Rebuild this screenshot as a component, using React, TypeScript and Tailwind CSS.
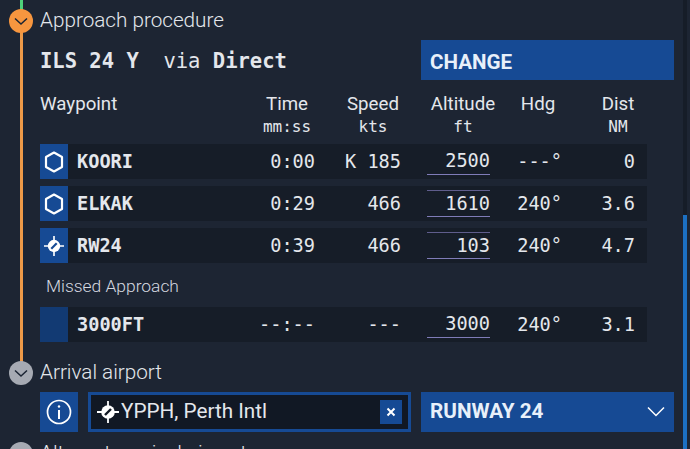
const mono = "font-['DejaVu_Sans_Mono',monospace]"

const Hexagon = () => (
  <svg width="22" height="24" viewBox="0 0 22 24" fill="none" stroke="white" strokeWidth="2.2">
    <path d="M11 2.5 L19 7 L19 17 L11 21.5 L3 17 L3 7 Z" strokeLinejoin="round" />
  </svg>
)

const RunwayIcon = ({ size, slash }: { size: number; slash: string }) => (
  <svg width={size} height={size} viewBox="0 0 22 22">
    <path d="M11 0 V22 M0 11 H22" stroke="white" strokeWidth="1.8" />
    <circle cx="11" cy="11" r="6.8" fill="white" />
    <path d="M8 14 L14 8" stroke={slash} strokeWidth="2.4" />
  </svg>
)

const Chevron = () => (
  <svg width="16" height="9" viewBox="0 0 16 9" fill="none" stroke="#1b2433" strokeWidth="1.5">
    <path d="M2 1.5 L8 7 L14 1.5" />
  </svg>
)

type Row = {
  name: string
  icon?: "hex" | "rwy"
  time: string
  speed: string
  alt: string
  topLine?: boolean
  hdg: string
  dist: string
}

const approach: Row[] = [
  { name: "KOORI", icon: "hex", time: "0:00", speed: "K 185", alt: "2500", hdg: "---°", dist: "0" },
  { name: "ELKAK", icon: "hex", time: "0:29", speed: "466", alt: "1610", topLine: true, hdg: "240°", dist: "3.6" },
  { name: "RW24", icon: "rwy", time: "0:39", speed: "466", alt: "103", topLine: true, hdg: "240°", dist: "4.7" },
]

const missed: Row = { name: "3000FT", time: "--:--", speed: "---", alt: "3000", hdg: "240°", dist: "3.1" }

const WaypointRow = ({ row }: { row: Row }) => (
  <div className={`grid h-[35px] w-[607px] grid-cols-[28px_182px_65px_86px_89px_72px_73px_12px] items-center bg-[#161d28] text-[18.6px] text-[#e4e7ec] ${mono}`}>
    <div className={`flex h-full items-center justify-center ${row.icon ? "bg-[#164a94]" : "bg-[#123a73]"}`}>
      {row.icon === "hex" && <Hexagon />}
      {row.icon === "rwy" && <RunwayIcon size={20} slash="#164a94" />}
    </div>
    <div className="pl-[9px] font-bold">{row.name}</div>
    <div className="text-right">{row.time}</div>
    <div className="text-right">{row.speed}</div>
    <div className="flex justify-end">
      <div className={`flex h-[27px] w-[63px] items-center justify-end border-b border-b-[#7f7cb8] ${row.topLine ? "border-t border-t-[#5f5d8c]" : ""}`}>
        {row.alt}
      </div>
    </div>
    <div className="text-right">{row.hdg}</div>
    <div className="text-right">{row.dist}</div>
    <div />
  </div>
)

const SectionHeader = ({ title, color }: { title: string; color: string }) => (
  <div className="flex h-6 items-center">
    <div className="flex w-[40px] justify-start pl-[9px]">
      <div className={`relative z-10 flex size-6 items-center justify-center rounded-full ${color}`}>
        <Chevron />
      </div>
    </div>
    <div className="-mt-[1px] text-[20.7px] font-light text-[#e4e7ec]">{title}</div>
  </div>
)

export default function App() {
  return (
    <div className="relative h-[449px] w-[690px] overflow-hidden bg-[#1d2533] font-['Roboto',sans-serif]">
      <div className="absolute left-[20px] top-0 h-[10px] w-[3px] bg-[#4fd17a]" />
      <div className="absolute left-[20px] top-[30px] h-[332px] w-[3px] bg-[#ee9a48]" />
      <div className="absolute bottom-0 right-[3px] top-0 w-[4px] bg-[#161d28]" />
      <div className="absolute bottom-0 right-[3px] top-[215px] w-[4px] bg-[#1c70c2]" />

      <div className="flex flex-col pt-[9px]">
        <SectionHeader title="Approach procedure" color="bg-[#f7963f]" />

        <div className="mt-[7px] flex h-10 pl-[40px] text-[#e4e7ec]">
          <div className={`flex w-[381px] items-center whitespace-pre pt-[2px] text-[20.5px] ${mono}`}>
            <span className="font-bold">ILS 24 Y</span>
            <span>{"  via "}</span>
            <span className="font-bold">Direct</span>
          </div>
          <div className="flex w-[253px] items-center bg-[#164a94] pl-[9px] pt-[4px] text-[20.6px] font-bold text-[#e8f0fa]">
            CHANGE
          </div>
        </div>

        <div className="ml-[40px] mt-[13px] grid h-[51px] w-[619px] grid-cols-[215px_64px_108px_72px_78px_82px] text-center text-[18.7px] leading-[22px] text-[#e4e7ec]">
          <div className="text-left">Waypoint</div>
          {[
            ["Time", "mm:ss"],
            ["Speed", "kts"],
            ["Altitude", "ft"],
            ["Hdg", ""],
            ["Dist", "NM"],
          ].map(([label, unit]) => (
            <div key={label}>
              <div>{label}</div>
              <div className={`pt-[1px] text-[16px] ${mono}`}>{unit}</div>
            </div>
          ))}
        </div>

        <div className="ml-[40px] flex flex-col gap-[7px]">
          {approach.map((row) => (
            <WaypointRow key={row.name} row={row} />
          ))}
        </div>

        <div className="ml-[46px] mt-[12px] h-[32px] text-[17.4px] font-light leading-[22px] text-[#d5d9e0]">
          Missed Approach
        </div>

        <div className="ml-[40px]">
          <WaypointRow row={missed} />
        </div>

        <div className="mt-[19px]">
          <SectionHeader title="Arrival airport" color="bg-[#a6aab3]" />
        </div>

        <div className="mt-[7px] flex h-10 pl-[40px]">
          <div className="flex w-[38px] items-center justify-center bg-[#164a94]">
            <svg width="26" height="26" viewBox="0 0 26 26" fill="none" stroke="white">
              <circle cx="13" cy="13" r="11.5" strokeWidth="1.7" />
              <path d="M13 11 V20" strokeWidth="2" />
              <circle cx="13" cy="7.5" r="1.2" fill="white" stroke="none" />
            </svg>
          </div>
          <div className="ml-[10px] flex w-[323px] items-center border-[3px] border-[#164a94] bg-[#111824] pl-[6px] pr-[6px]">
            <RunwayIcon size={22} slash="#111824" />
            <span className="ml-[2px] text-[20.7px] text-[#e4e7ec]">YPPH, Perth Intl</span>
            <div className="ml-auto flex h-6 w-[22px] items-center justify-center bg-[#164a94]">
              <svg width="10" height="10" viewBox="0 0 10 10" stroke="white" strokeWidth="2">
                <path d="M1.5 1.5 L8.5 8.5 M8.5 1.5 L1.5 8.5" />
              </svg>
            </div>
          </div>
          <div className="ml-[10px] flex w-[253px] items-center justify-between bg-[#164a94] px-[9px] pb-[1px] text-[20.7px] font-bold text-[#e8f0fa]">
            RUNWAY 24
            <svg width="18" height="11" viewBox="0 0 18 11" fill="none" stroke="white" strokeWidth="1.5">
              <path d="M1 1.5 L9 9.5 L17 1.5" />
            </svg>
          </div>
        </div>

        <div className="mt-[10px]">
          <SectionHeader title="Alternate arrival airport" color="bg-[#a6aab3]" />
        </div>
      </div>
    </div>
  )
}
